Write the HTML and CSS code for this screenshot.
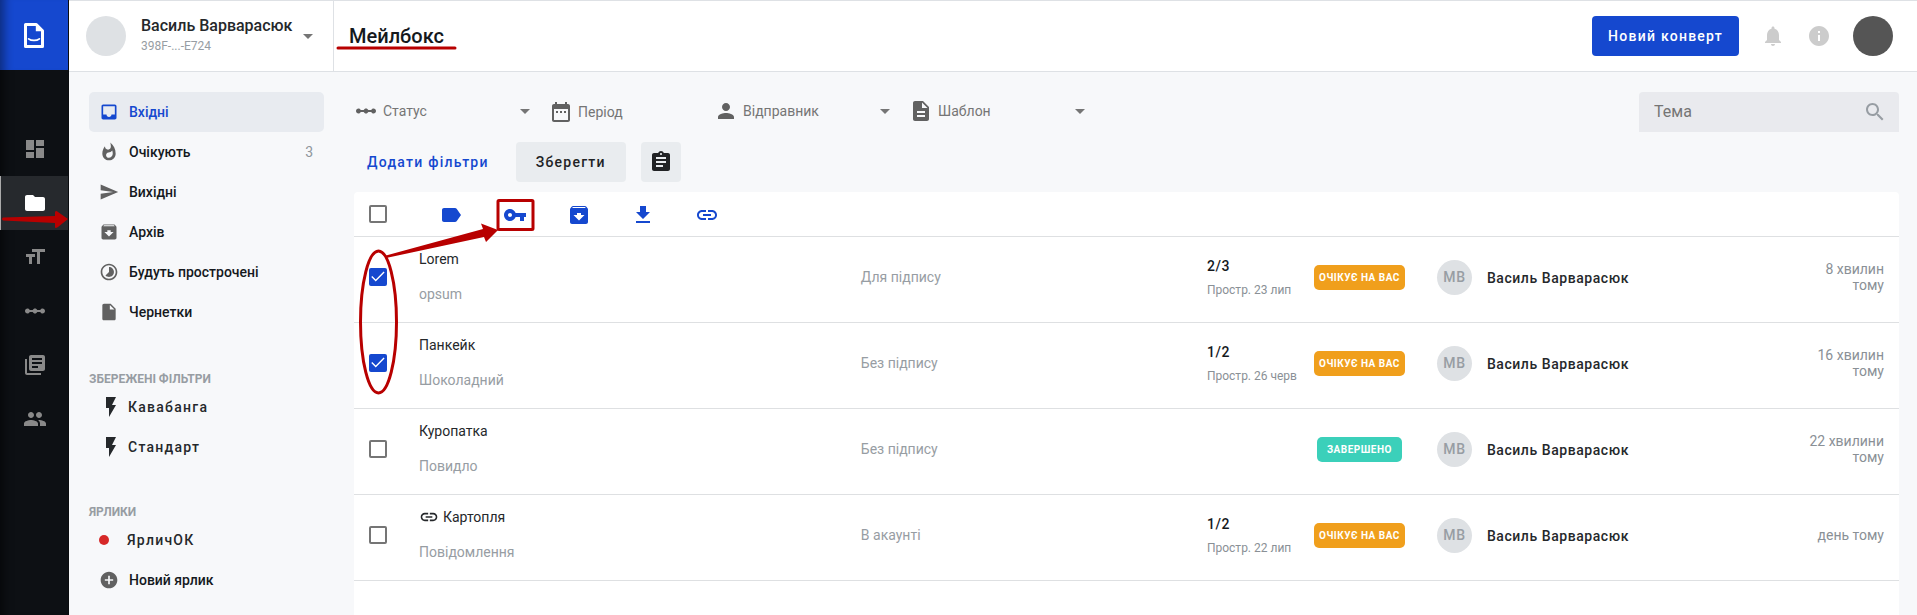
FILE: index.html
```html
<!DOCTYPE html>
<html lang="uk">
<head>
<meta charset="utf-8">
<title>Мейлбокс</title>
<link rel="stylesheet" href="styles.css">
</head>
<body>
<svg class="sprite" aria-hidden="true">
  <symbol id="i-dashboard" viewBox="0 0 24 24"><path d="M3 13h8V3H3v10zm0 8h8v-6H3v6zm10 0h8V11h-8v10zm0-18v6h8V3h-8z"/></symbol>
  <symbol id="i-folder" viewBox="0 0 24 24"><path d="M10 4H4c-1.1 0-1.99.9-1.99 2L2 18c0 1.1.9 2 2 2h16c1.1 0 2-.9 2-2V8c0-1.1-.9-2-2-2h-8l-2-2z"/></symbol>
  <symbol id="i-size" viewBox="0 0 24 24"><path d="M9 4v3h5v12h3V7h5V4H9zm-6 8h3v7h3v-7h3V9H3v3z"/></symbol>
  <symbol id="i-scale" viewBox="0 0 24 24"><path d="M19.5 9.5c-1.03 0-1.9.62-2.29 1.5h-2.92C13.9 10.12 13.03 9.5 12 9.5s-1.9.62-2.29 1.5H6.79c-.39-.88-1.26-1.5-2.29-1.5C3.12 9.5 2 10.62 2 12s1.12 2.5 2.5 2.5c1.03 0 1.9-.62 2.29-1.5h2.92c.39.88 1.26 1.5 2.29 1.5s1.9-.62 2.29-1.5h2.92c.39.88 1.26 1.5 2.29 1.5 1.38 0 2.5-1.12 2.5-2.5s-1.12-2.5-2.5-2.5z"/></symbol>
  <symbol id="i-library" viewBox="0 0 24 24"><path d="M4 6H2v14c0 1.1.9 2 2 2h14v-2H4V6zm16-4H8c-1.1 0-2 .9-2 2v12c0 1.1.9 2 2 2h12c1.1 0 2-.9 2-2V4c0-1.1-.9-2-2-2zm-1 9H9V9h10v2zm-4 4H9v-2h6v2zm4-8H9V5h10v2z"/></symbol>
  <symbol id="i-people" viewBox="0 0 24 24"><path d="M16 11c1.66 0 2.99-1.34 2.99-3S17.66 5 16 5c-1.66 0-3 1.34-3 3s1.34 3 3 3zm-8 0c1.66 0 2.99-1.34 2.99-3S9.66 5 8 5C6.34 5 5 6.34 5 8s1.34 3 3 3zm0 2c-2.33 0-7 1.17-7 3.5V19h14v-2.5c0-2.33-4.67-3.5-7-3.5zm8 0c-.29 0-.62.02-.97.05 1.16.84 1.97 1.97 1.97 3.45V19h6v-2.5c0-2.33-4.67-3.5-7-3.5z"/></symbol>
  <symbol id="i-inbox" viewBox="0 0 24 24"><path d="M19 3H4.99c-1.11 0-1.98.89-1.98 2L3 19c0 1.1.88 2 1.99 2H19c1.1 0 2-.9 2-2V5c0-1.11-.9-2-2-2zm0 12h-4c0 1.66-1.35 3-3 3s-3-1.34-3-3H4.99V5H19v10z"/></symbol>
  <symbol id="i-fire" viewBox="0 0 24 24"><path d="M13.5.67s.74 2.65.74 4.8c0 2.06-1.35 3.73-3.41 3.73-2.07 0-3.63-1.67-3.63-3.73l.03-.36C5.21 7.51 4 10.62 4 14c0 4.42 3.58 8 8 8s8-3.58 8-8C20 8.61 17.41 3.8 13.5.67zM11.71 19c-1.78 0-3.22-1.4-3.22-3.14 0-1.62 1.05-2.76 2.81-3.12 1.77-.36 3.6-1.21 4.62-2.58.39 1.29.59 2.65.59 4.04 0 2.65-2.15 4.8-4.8 4.8z"/></symbol>
  <symbol id="i-send" viewBox="0 0 24 24"><path d="M2.01 21L23 12 2.01 3 2 10l15 2-15 2z"/></symbol>
  <symbol id="i-archive" viewBox="0 0 24 24"><path d="M20.54 5.23l-1.39-1.68C18.88 3.21 18.47 3 18 3H6c-.47 0-.88.21-1.16.55L3.46 5.23C3.17 5.57 3 6.02 3 6.5V19c0 1.1.9 2 2 2h14c1.1 0 2-.9 2-2V6.5c0-.48-.17-.93-.46-1.27zM12 17.5L6.5 12H10v-2h4v2h3.5L12 17.5zM5.12 5l.81-1h12l.94 1H5.12z"/></symbol>
  <symbol id="i-timelapse" viewBox="0 0 24 24"><path d="M16.24 7.76C15.07 6.59 13.54 6 12 6v6l-4.24 4.24c2.34 2.34 6.14 2.34 8.49 0 2.34-2.34 2.34-6.14-.01-8.48zM12 2C6.48 2 2 6.48 2 12s4.48 10 10 10 10-4.48 10-10S17.52 2 12 2zm0 18c-4.42 0-8-3.58-8-8s3.58-8 8-8 8 3.58 8 8-3.58 8-8 8z"/></symbol>
  <symbol id="i-file" viewBox="0 0 24 24"><path d="M6 2c-1.1 0-1.99.9-1.99 2L4 20c0 1.1.89 2 1.99 2H18c1.1 0 2-.9 2-2V8l-6-6H6zm7 7V3.5L18.5 9H13z"/></symbol>
  <symbol id="i-flash" viewBox="0 0 24 24"><path d="M7 2v11h3v9l7-12h-4l4-8z"/></symbol>
  <symbol id="i-add" viewBox="0 0 24 24"><path d="M12 2C6.48 2 2 6.48 2 12s4.48 10 10 10 10-4.48 10-10S17.52 2 12 2zm5 11h-4v4h-2v-4H7v-2h4V7h2v4h4v2z"/></symbol>
  <symbol id="i-date" viewBox="0 0 24 24"><path d="M9 11H7v2h2v-2zm4 0h-2v2h2v-2zm4 0h-2v2h2v-2zm2-7h-1V2h-2v2H8V2H6v2H5c-1.11 0-1.99.9-1.99 2L3 20c0 1.1.89 2 2 2h14c1.1 0 2-.9 2-2V6c0-1.1-.9-2-2-2zm0 16H5V9h14v11z"/></symbol>
  <symbol id="i-person" viewBox="0 0 24 24"><path d="M12 12c2.21 0 4-1.79 4-4s-1.79-4-4-4-4 1.79-4 4 1.79 4 4 4zm0 2c-2.67 0-8 1.34-8 4v2h16v-2c0-2.66-5.33-4-8-4z"/></symbol>
  <symbol id="i-description" viewBox="0 0 24 24"><path d="M14 2H6c-1.1 0-1.99.9-1.99 2L4 20c0 1.1.89 2 1.99 2H18c1.1 0 2-.9 2-2V8l-6-6zm2 16H8v-2h8v2zm0-4H8v-2h8v2zm-3-5V3.5L18.5 9H13z"/></symbol>
  <symbol id="i-assignment" viewBox="0 0 24 24"><path d="M19 3h-4.18C14.4 1.84 13.3 1 12 1c-1.3 0-2.4.84-2.82 2H5c-1.1 0-2 .9-2 2v14c0 1.1.9 2 2 2h14c1.1 0 2-.9 2-2V5c0-1.1-.9-2-2-2zm-7 0c.55 0 1 .45 1 1s-.45 1-1 1-1-.45-1-1 .45-1 1-1zm2 14H7v-2h7v2zm3-4H7v-2h10v2zm0-4H7V7h10v2z"/></symbol>
  <symbol id="i-label" viewBox="0 0 24 24"><path d="M17.63 5.84C17.27 5.33 16.67 5 16 5L5 5.01C3.9 5.01 3 5.9 3 7v10c0 1.1.9 1.99 2 1.99L16 19c.67 0 1.27-.33 1.63-.84L22 12l-4.37-6.16z"/></symbol>
  <symbol id="i-key" viewBox="0 0 24 24"><path d="M12.65 10C11.83 7.67 9.61 6 7 6c-3.31 0-6 2.69-6 6s2.69 6 6 6c2.61 0 4.83-1.67 5.65-4H17v4h4v-4h2v-4H12.65zM7 14c-1.1 0-2-.9-2-2s.9-2 2-2 2 .9 2 2-.9 2-2 2z"/></symbol>
  <symbol id="i-download" viewBox="0 0 24 24"><path d="M19 9h-4V3H9v6H5l7 7 7-7zM5 18v2h14v-2H5z"/></symbol>
  <symbol id="i-link" viewBox="0 0 24 24"><path d="M3.9 12c0-1.71 1.39-3.1 3.1-3.1h4V7H7c-2.76 0-5 2.24-5 5s2.24 5 5 5h4v-1.9H7c-1.71 0-3.1-1.39-3.1-3.1zM8 13h8v-2H8v2zm9-6h-4v1.9h4c1.71 0 3.1 1.39 3.1 3.1s-1.39 3.1-3.1 3.1h-4V17h4c2.76 0 5-2.24 5-5s-2.24-5-5-5z"/></symbol>
  <symbol id="i-caret" viewBox="0 0 24 24"><path d="M7 10l5 5 5-5z"/></symbol>
  <symbol id="i-search" viewBox="0 0 24 24"><path d="M15.5 14h-.79l-.28-.27C15.41 12.59 16 11.11 16 9.5 16 5.91 13.09 3 9.5 3S3 5.91 3 9.5 5.91 16 9.5 16c1.61 0 3.09-.59 4.23-1.57l.27.28v.79l5 4.99L20.49 19l-4.99-5zm-6 0C7.01 14 5 11.99 5 9.5S7.01 5 9.5 5 14 7.01 14 9.5 11.99 14 9.5 14z"/></symbol>
  <symbol id="i-bell" viewBox="0 0 24 24"><path d="M12 22c1.1 0 2-.9 2-2h-4c0 1.1.89 2 2 2zm6-6v-5c0-3.07-1.64-5.64-4.5-6.32V4c0-.83-.67-1.5-1.5-1.5s-1.5.67-1.5 1.5v.68C7.63 5.36 6 7.92 6 11v5l-2 2v1h16v-1l-2-2z"/></symbol>
  <symbol id="i-info" viewBox="0 0 24 24"><path d="M12 2C6.48 2 2 6.48 2 12s4.48 10 10 10 10-4.48 10-10S17.52 2 12 2zm1 15h-2v-6h2v6zm0-8h-2V7h2v2z"/></symbol>
</svg>

<div class="app">
  <nav class="rail" aria-label="Розділи">
    <a class="rail-logo" href="#" aria-label="Головна">
      <svg class="logo" viewBox="0 0 20 25"><path fill="none" stroke="#fff" stroke-width="3" stroke-linejoin="round" d="M1.5 1.5h10.8l6.2 6.2v15.8h-17z"/><path fill="#fff" d="M11.8 1l7.4 7.2h-7.4z"/><path fill="none" stroke="#fff" stroke-width="1.7" stroke-linecap="round" d="M4.6 15.8c2.7 2.2 8.1 2.2 10.8 0"/></svg>
    </a>
    <a class="rail-item" href="#" aria-label="Панель"><svg class="icon"><use href="#i-dashboard"/></svg></a>
    <a class="rail-item rail-item-active" href="#" aria-label="Мейлбокс"><svg class="icon"><use href="#i-folder"/></svg></a>
    <a class="rail-item" href="#" aria-label="Шаблони"><svg class="icon"><use href="#i-size"/></svg></a>
    <a class="rail-item" href="#" aria-label="Процеси"><svg class="icon"><use href="#i-scale"/></svg></a>
    <a class="rail-item" href="#" aria-label="Довідники"><svg class="icon"><use href="#i-library"/></svg></a>
    <a class="rail-item" href="#" aria-label="Користувачі"><svg class="icon"><use href="#i-people"/></svg></a>
  </nav>

  <div class="page">
    <header class="header">
      <button class="account" type="button">
        <span class="account-avatar"></span>
        <span class="account-text">
          <span class="account-name">Василь Варварасюк</span>
          <span class="account-id">398F-...-E724</span>
        </span>
        <svg class="icon"><use href="#i-caret"/></svg>
      </button>
      <h1 class="title">Мейлбокс</h1>
      <button class="btn btn-primary" type="button">Новий конверт</button>
      <div class="header-icons">
        <button class="icon-btn" type="button" aria-label="Сповіщення"><svg class="icon"><use href="#i-bell"/></svg></button>
        <button class="icon-btn" type="button" aria-label="Інформація"><svg class="icon"><use href="#i-info"/></svg></button>
      </div>
      <button class="user-avatar" type="button" aria-label="Профіль"></button>
    </header>

    <div class="body">
      <aside class="sidebar">
        <nav class="menu">
          <a class="menu-item menu-item-active" href="#"><svg class="icon icon-s"><use href="#i-inbox"/></svg>Вхідні</a>
          <a class="menu-item" href="#"><svg class="icon icon-s"><use href="#i-fire"/></svg>Очікують<span class="menu-count">3</span></a>
          <a class="menu-item" href="#"><svg class="icon icon-s"><use href="#i-send"/></svg>Вихідні</a>
          <a class="menu-item" href="#"><svg class="icon icon-s"><use href="#i-archive"/></svg>Архів</a>
          <a class="menu-item" href="#"><svg class="icon icon-s"><use href="#i-timelapse"/></svg>Будуть прострочені</a>
          <a class="menu-item" href="#"><svg class="icon icon-s"><use href="#i-file"/></svg>Чернетки</a>
        </nav>
        <section class="group">
          <h2 class="group-title">Збережені фільтри</h2>
          <a class="menu-item menu-item-wide" href="#"><svg class="icon"><use href="#i-flash"/></svg>Кавабанга</a>
          <a class="menu-item menu-item-wide" href="#"><svg class="icon"><use href="#i-flash"/></svg>Стандарт</a>
        </section>
        <section class="group">
          <h2 class="group-title">Ярлики</h2>
          <a class="menu-item menu-item-tag" href="#"><span class="dot"></span>ЯрличОК</a>
          <button class="menu-item" type="button"><svg class="icon icon-s"><use href="#i-add"/></svg>Новий ярлик</button>
        </section>
      </aside>

      <main class="main">
        <div class="filters">
          <label class="filter"><svg class="icon"><use href="#i-scale"/></svg><select class="field" aria-label="Статус"><option>Статус</option></select><svg class="icon caret"><use href="#i-caret"/></svg></label>
          <label class="filter filter-date"><svg class="icon"><use href="#i-date"/></svg><input class="field" type="text" placeholder="Період" aria-label="Період"></label>
          <label class="filter"><svg class="icon"><use href="#i-person"/></svg><select class="field" aria-label="Відправник"><option>Відправник</option></select><svg class="icon caret"><use href="#i-caret"/></svg></label>
          <label class="filter"><svg class="icon"><use href="#i-description"/></svg><select class="field" aria-label="Шаблон"><option>Шаблон</option></select><svg class="icon caret"><use href="#i-caret"/></svg></label>
          <label class="search"><input class="search-input" type="text" placeholder="Тема" aria-label="Тема"><svg class="icon"><use href="#i-search"/></svg></label>
        </div>
        <div class="filter-actions">
          <button class="btn btn-text" type="button">Додати фільтри</button>
          <button class="btn btn-grey" type="button">Зберегти</button>
          <button class="btn btn-grey btn-square" type="button" aria-label="Звіт"><svg class="icon"><use href="#i-assignment"/></svg></button>
        </div>

        <section class="card">
          <div class="toolbar">
            <input class="check" type="checkbox" aria-label="Вибрати всі">
            <div class="tools">
              <button class="tool" type="button" aria-label="Ярлик"><svg class="icon"><use href="#i-label"/></svg></button>
              <button class="tool" type="button" aria-label="Доступ"><svg class="icon"><use href="#i-key"/></svg></button>
              <button class="tool" type="button" aria-label="Архівувати"><svg class="icon"><use href="#i-archive"/></svg></button>
              <button class="tool" type="button" aria-label="Завантажити"><svg class="icon"><use href="#i-download"/></svg></button>
              <button class="tool" type="button" aria-label="Зв'язати"><svg class="icon"><use href="#i-link"/></svg></button>
            </div>
          </div>
          <table class="mails">
            <colgroup><col class="c-check"><col class="c-subject"><col class="c-type"><col class="c-progress"><col class="c-status"><col><col class="c-time"></colgroup>
            <tbody>
              <tr>
                <td class="cell-check"><input class="check" type="checkbox" checked aria-label="Lorem"></td>
                <td><div class="subject">Lorem</div><div class="note">opsum</div></td>
                <td class="muted">Для підпису</td>
                <td class="cell-low"><div class="progress">2/3</div><div class="due">Простр. 23 лип</div></td>
                <td class="cell-low cell-status"><span class="badge">Очікує на вас</span></td>
                <td class="cell-low"><div class="sender"><span class="initials">МВ</span>Василь Варварасюк</div></td>
                <td class="time">8 хвилин тому</td>
              </tr>
              <tr>
                <td class="cell-check"><input class="check" type="checkbox" checked aria-label="Панкейк"></td>
                <td><div class="subject">Панкейк</div><div class="note">Шоколадний</div></td>
                <td class="muted">Без підпису</td>
                <td class="cell-low"><div class="progress">1/2</div><div class="due">Простр. 26 черв</div></td>
                <td class="cell-low cell-status"><span class="badge">Очікує на вас</span></td>
                <td class="cell-low"><div class="sender"><span class="initials">МВ</span>Василь Варварасюк</div></td>
                <td class="time">16 хвилин тому</td>
              </tr>
              <tr>
                <td class="cell-check"><input class="check" type="checkbox" aria-label="Куропатка"></td>
                <td><div class="subject">Куропатка</div><div class="note">Повидло</div></td>
                <td class="muted">Без підпису</td>
                <td class="cell-low"></td>
                <td class="cell-low cell-status"><span class="badge badge-done">Завершено</span></td>
                <td class="cell-low"><div class="sender"><span class="initials">МВ</span>Василь Варварасюк</div></td>
                <td class="time">22 хвилини тому</td>
              </tr>
              <tr>
                <td class="cell-check"><input class="check" type="checkbox" aria-label="Картопля"></td>
                <td><div class="subject"><svg class="icon icon-s"><use href="#i-link"/></svg>Картопля</div><div class="note">Повідомлення</div></td>
                <td class="muted">В акаунті</td>
                <td class="cell-low"><div class="progress">1/2</div><div class="due">Простр. 22 лип</div></td>
                <td class="cell-low cell-status"><span class="badge">Очікує на вас</span></td>
                <td class="cell-low"><div class="sender"><span class="initials">МВ</span>Василь Варварасюк</div></td>
                <td class="time">день тому</td>
              </tr>
            </tbody>
          </table>
        </section>
      </main>
    </div>
  </div>
</div>

<svg class="marks" aria-hidden="true" width="560" height="420" viewBox="0 0 560 420">
  <path class="mark-line" d="M338 48h117"/>
  <rect class="mark-line" x="498" y="200.500" width="35" height="29" rx="1"/>
  <ellipse class="mark-line" cx="378.500" cy="322" rx="18" ry="71"/>
  <path class="mark-fill" d="M386 255.500L483 229l-2-5.500 17 6.500-12 12-2-5-98 21z"/>
  <path class="mark-fill" d="M3 217.500l52-1.500v-4q1-2 3 0l10 7-10 8q-3 2-3 0v-4l-52-2.500q-2-1.500 0-3z"/>
</svg>
</body>
</html>
```
FILE: styles.css
```css
*,
*::before,
*::after { box-sizing: border-box; }

body {
  margin: 0;
  font-family: Roboto, "Liberation Sans", sans-serif;
  font-size: 14px;
  line-height: 20px;
  color: #25282b;
  background: #f7f8fa;
  overflow: hidden;
}

button,
input,
select { font: inherit; color: inherit; margin: 0; }
button { padding: 0; border: 0; background: none; text-align: left; cursor: pointer; }
a { color: inherit; text-decoration: none; }

.sprite { display: none; }
.icon { display: block; flex: none; width: 24px; height: 24px; fill: currentColor; }
.icon-s { width: 20px; height: 20px; }

.app { display: flex; min-height: 100vh; }
.page { flex: 1; min-width: 0; display: flex; flex-direction: column; }

/* Dark navigation rail */
.rail {
  flex: none;
  width: 69px;
  background: #0d1014;
  border-right: 1px solid #0a0c0f;
  box-shadow: inset 12px 0 10px -8px rgba(0, 0, 0, .5);
  color: #898989;
}
.rail-logo {
  display: flex;
  align-items: center;
  justify-content: center;
  height: 70px;
  margin-bottom: 52px;
  background: #1548cf;
  box-shadow: inset 12px 0 10px -8px rgba(0, 0, 0, .4);
}
.logo { width: 20px; height: 25px; }
.rail-item {
  display: flex;
  align-items: center;
  justify-content: center;
  height: 54px;
  border-left: 1px solid transparent;
}
.rail-item-active { background: #26292d; border-left-color: #aaa; color: #fff; }

/* Top bar */
.header {
  display: flex;
  align-items: center;
  height: 72px;
  padding-right: 24px;
  background: #fff;
  border-top: 1px solid #dee1e5;
  border-bottom: 1px solid #dee1e5;
}
.account {
  display: flex;
  align-items: center;
  align-self: stretch;
  width: 265px;
  padding: 0 13px 0 17px;
  border-right: 1px solid #dee1e5;
}
.account-avatar { width: 40px; height: 40px; margin-right: 15px; border-radius: 50%; background: #dee1e4; }
.account-text { flex: 1; padding-bottom: 1px; white-space: nowrap; }
.account-name { display: block; font-size: 16px; font-weight: 500; }
.account-id { display: block; font-size: 12px; color: #979da3; }
.account .icon { color: #757575; }
.title { flex: 1; margin: 0 0 0 15px; font-size: 20px; font-weight: 500; line-height: 24px; color: #15191d; }
.header-icons { display: flex; gap: 22px; margin: 0 22px; color: #ccc; }
.user-avatar { width: 40px; height: 40px; border-radius: 50%; background: #555; }

.btn {
  height: 40px;
  padding: 0 16px;
  border-radius: 4px;
  font-weight: 500;
  letter-spacing: .09em;
  text-align: center;
}
.btn-primary { background: #1548cf; color: #fff; }
.btn-text { padding: 0 12px 0 13px; color: #1548cf; }
.btn-grey { width: 110px; padding: 0; background: #e9ecef; color: #212325; }
.btn-square { width: 40px; padding: 0 8px; }

.body { flex: 1; display: flex; padding: 20px 18px 0 20px; }

/* Sidebar */
.sidebar { flex: none; width: 235px; margin-right: 30px; }
.menu-item {
  display: flex;
  align-items: center;
  gap: 10px;
  width: 100%;
  height: 40px;
  padding: 0 11px 0 10px;
  border-radius: 5px;
  font-weight: 500;
  color: #15191d;
}
.menu-item .icon-s { color: #616161; }
.menu-item-active { background: #e8ebf0; color: #1548cf; }
.menu-item-active .icon-s { color: inherit; }
.menu-count { margin-left: auto; font-weight: 400; color: #8f969c; }
.menu-item-wide,
.menu-item-tag { letter-spacing: .09em; color: #25282b; }
.menu-item-wide { gap: 5px; }
.menu-item-tag { gap: 18px; }
.dot { width: 10px; height: 10px; border-radius: 50%; background: #d62828; }
.menu + .group { margin-top: 39px; }
.group { margin-top: 37px; }
.group-title {
  margin: 0;
  font-size: 12px;
  font-weight: 700;
  line-height: 16px;
  text-transform: uppercase;
  color: #979da3;
}

/* Filters */
.main { flex: 1; min-width: 0; display: flex; flex-direction: column; }
.filters { display: flex; align-items: center; gap: 12px; color: #616161; }
.filter { position: relative; display: flex; align-items: center; gap: 5px; width: 183px; height: 40px; padding-bottom: 2px; }
.filter-date { width: 153px; padding: 0; }
.field {
  flex: 1;
  min-width: 0;
  height: 24px;
  padding: 0;
  border: 0;
  background: none;
  appearance: none;
  color: #757575;
}
.field::placeholder,
.search-input::placeholder { color: #757575; opacity: 1; }
.caret { position: absolute; right: 0; color: #757575; pointer-events: none; }
.search {
  display: flex;
  align-items: center;
  width: 260px;
  height: 40px;
  margin-left: auto;
  padding: 0 12px 0 15px;
  border-radius: 4px 4px 0 0;
  background: #e9eaee;
  color: #979da3;
}
.search-input { flex: 1; min-width: 0; padding: 0; border: 0; background: none; font-size: 16px; }
.filter-actions { display: flex; gap: 15px; margin: 10px 0; }

/* Mail list */
.card { flex: 1; background: #fff; border-radius: 4px 4px 0 0; }
.toolbar {
  display: flex;
  align-items: center;
  gap: 32px;
  height: 45px;
  padding-left: 15px;
  border-bottom: 1px solid #dee0e2;
}
.tools { display: flex; padding-top: 1px; color: #1548cf; }
.tool { display: flex; justify-content: center; width: 64px; }
.check {
  display: block;
  width: 18px;
  height: 18px;
  border: 2px solid #757575;
  border-radius: 2px;
  appearance: none;
  background: #fff;
}
.check:checked { border-color: #1548cf; background: #1548cf; }
.check:checked::after {
  content: "";
  display: block;
  width: 14px;
  height: 14px;
  background: #fff;
  clip-path: polygon(2% 54%, 9% 47%, 34% 71%, 90% 14%, 97% 21%, 34% 86%);
}

.mails { width: 100%; table-layout: fixed; border-collapse: separate; border-spacing: 0; }
.mails td { height: 86px; padding: 0 0 6px; border-bottom: 1px solid #dee0e2; vertical-align: middle; }
.mails .cell-check { padding-left: 15px; }
.mails .cell-low { padding-bottom: 4px; }
.c-check { width: 65px; }
.c-subject { width: 28.6%; }
.c-type { width: 22.4%; }
.c-progress { width: 98px; }
.c-status { width: 109px; }
.c-time { width: 95px; }
.subject { display: flex; align-items: center; gap: 4px; margin-bottom: 15px; }
.note,
.muted { color: #979da3; }
.progress { margin-bottom: 4px; font-weight: 500; letter-spacing: .04em; color: #15191d; }
.due { font-size: 12px; color: #8a9096; white-space: nowrap; }
.cell-status { text-align: center; }
.badge {
  display: inline-block;
  padding: 0 5px;
  border-radius: 5px;
  background: #f09f1c;
  color: #fff;
  font-size: 10px;
  font-weight: 700;
  letter-spacing: .05em;
  line-height: 25px;
  text-transform: uppercase;
  white-space: nowrap;
  vertical-align: middle;
}
.badge-done { padding: 0 10px; background: #3bd0ba; }
.sender {
  display: flex;
  align-items: center;
  gap: 15px;
  padding-left: 23px;
  font-weight: 500;
  letter-spacing: .04em;
  white-space: nowrap;
}
.initials {
  width: 35px;
  border-radius: 50%;
  background: #dee1e4;
  color: #979da3;
  line-height: 35px;
  text-align: center;
}
.mails .time { padding-right: 15px; line-height: 16px; text-align: right; color: #8a9096; }

/* Hand-drawn guide marks laid over the page */
.marks { position: absolute; top: 0; left: 0; pointer-events: none; }
.mark-line { fill: none; stroke: #b80000; stroke-width: 3; stroke-linejoin: round; stroke-linecap: round; }
.mark-fill { fill: #b80000; }
```
